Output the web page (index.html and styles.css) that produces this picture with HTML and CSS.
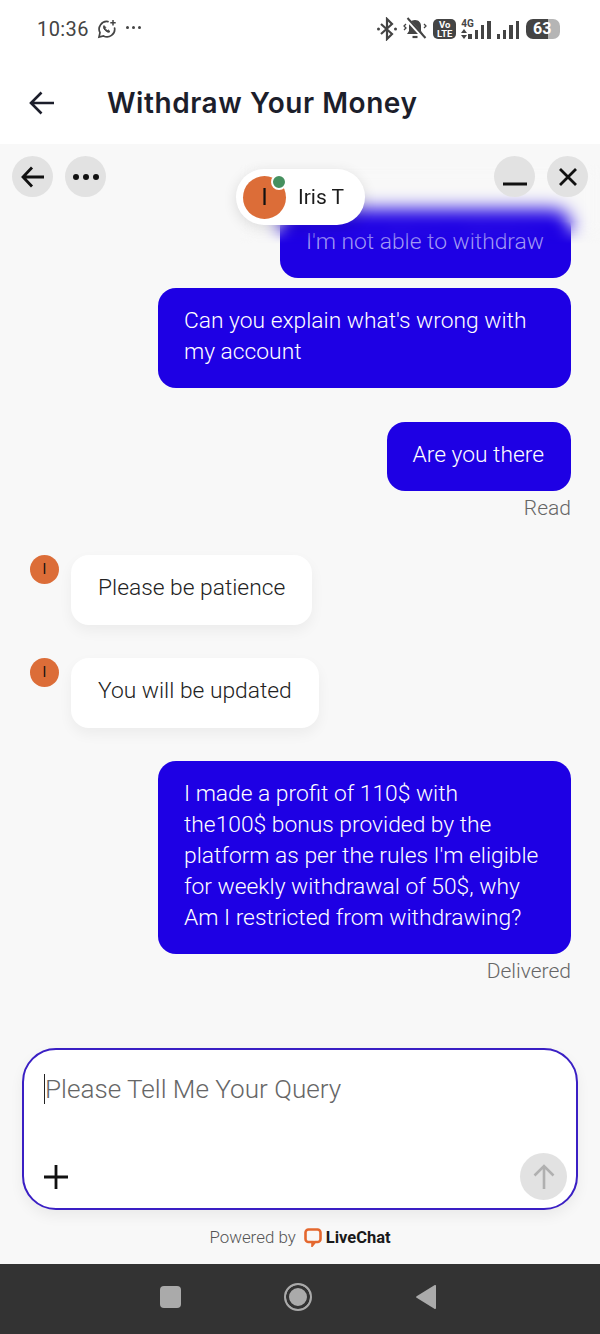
FILE: index.html
```html
<!DOCTYPE html>
<html>
  <head>
    <title>Withdraw Your Money</title>
    <meta charset="UTF-8" />
    <meta name="viewport" content="width=device-width, initial-scale=1.0" />
    <link rel="stylesheet" href="styles.css">
  </head>
  <body>
    <div class="status-bar">
      <div class="status-left">
        <span class="clock">10:36</span>
        <svg class="wa-icon" width="20" height="20" viewBox="0 0 20 20" fill="none" stroke="#444" stroke-width="1.7">
          <path d="M11 2.6A7.6 7.6 0 0 0 3 13.6L2 18l4.5-1.1A7.6 7.6 0 0 0 17.6 9" stroke-linecap="round" />
          <path d="M7 6.6c-1 1 -.6 3 1.2 4.8s3.8 2.3 4.8 1.2l-1.7-1.6-1 .6c-1-.5-1.7-1.2-2.2-2.2l.6-1z" fill="#444" stroke-width="1" />
          <path d="M16 1v5.4M13.3 3.7h5.4" stroke-width="1.5" />
        </svg>
        <span class="dots-small"><i></i><i></i><i></i></span>
      </div>
      <div class="status-right">
        <svg width="20" height="24" viewBox="0 0 20 24" fill="none" stroke="#444" stroke-width="2.200">
          <path d="M4 7l11 10-5 5V2l5 5L4 17" />
          <circle cx="1.500" cy="12" r="1.500" fill="#444" stroke="none" />
          <circle cx="18.500" cy="12" r="1.500" fill="#444" stroke="none" />
        </svg>
        <svg width="24" height="24" viewBox="0 0 24 24" fill="none" stroke="#444">
          <path d="M12 3c-4 0-6 3-6 6v5l-2 3h16l-2-3V9c0-3-2-6-6-6z" fill="#444" stroke="none" />
          <path d="M9.500 20h5" stroke-width="2.200" />
          <path d="M3 1l18 20" stroke="#fff" stroke-width="3.600" />
          <path d="M4.500 1l18 20" stroke-width="2" />
          <path d="M3 7L1 9l2 2-2 2M21 7l2 2-2 2" stroke-width="1.300" />
        </svg>
        <span class="volte">Vo<br>LTE</span>
        <div class="signal-wrap">
          <div class="net-type">
            <span>4G</span>
            <svg width="6" height="10" viewBox="0 0 6 10" fill="#444">
              <path d="M3 0l3 4H0zM3 10L0 6h6z" />
            </svg>
          </div>
          <div class="bars">
            <i class="b1"></i><i class="b2"></i><i class="b3"></i><i class="b4"></i>
          </div>
        </div>
        <div class="bars second">
          <i class="b1"></i><i class="b2"></i><i class="b3"></i><i class="b4"></i>
        </div>
        <div class="battery"><span>63</span></div>
      </div>
    </div>

    <header class="app-header">
      <svg width="26" height="24" viewBox="0 0 26 24" fill="none" stroke="#1c1e2b" stroke-width="2.600">
        <path d="M25 12H2M12.500 1.500L2 12l10.500 10.500" />
      </svg>
      <h1>Withdraw Your Money</h1>
    </header>

    <main class="chat">
      <div class="chat-toolbar">
        <div class="toolbar-group">
          <button class="round-btn">
            <svg width="26" height="24" viewBox="0 0 26 24" fill="none" stroke="#111" stroke-width="2.800">
              <path d="M24 12H3M12 2.500L3 12l9 9.500" />
            </svg>
          </button>
          <button class="round-btn">
            <svg width="28" height="8" viewBox="0 0 28 8" fill="#111">
              <circle cx="4" cy="4" r="3" /><circle cx="14" cy="4" r="3" /><circle cx="24" cy="4" r="3" />
            </svg>
          </button>
        </div>
        <div class="toolbar-group">
          <button class="round-btn">
            <svg width="24" height="24" viewBox="0 0 24 24" stroke="#111" stroke-width="3">
              <path d="M0 19h24" />
            </svg>
          </button>
          <button class="round-btn">
            <svg width="20" height="20" viewBox="0 0 20 20" stroke="#111" stroke-width="2.800">
              <path d="M2 2l16 16M18 2L2 18" />
            </svg>
          </button>
        </div>
      </div>

      <div class="top-blur"></div>

      <div class="agent-pill">
        <div class="agent-avatar">I<span class="online-dot"></span></div>
        <span class="agent-name">Iris T</span>
      </div>

      <div class="messages">
        <div class="bubble out faded">I'm not able to withdraw</div>
        <div class="bubble out second-line">Can you explain what's wrong with my account</div>
        <div class="bubble out new-group">Are you there</div>
        <div class="msg-status">Read</div>

        <div class="msg-in first-in">
          <div class="small-avatar">I</div>
          <div class="bubble in">Please be patience</div>
        </div>
        <div class="msg-in next-in">
          <div class="small-avatar">I</div>
          <div class="bubble in">You will be updated</div>
        </div>

        <div class="bubble out wide">I made a profit of 110$ with the100$ bonus provided by the platform as per the rules I'm eligible for weekly withdrawal of 50$, why Am I restricted from withdrawing?</div>
        <div class="msg-status">Delivered</div>
      </div>

      <div class="composer">
        <div class="composer-input"><span class="caret"></span>Please Tell Me Your Query</div>
        <div class="composer-actions">
          <svg width="24" height="24" viewBox="0 0 24 24" stroke="#111" stroke-width="2.800">
            <path d="M12 0v24M0 12h24" />
          </svg>
          <button class="send-btn">
            <svg width="22" height="26" viewBox="0 0 22 26" fill="none" stroke="#b0b0b0" stroke-width="2.600">
              <path d="M11 25V2M1.500 11.500L11 2l9.500 9.500" />
            </svg>
          </button>
        </div>
      </div>

      <div class="powered">
        <span>Powered by</span>
        <svg width="18" height="19" viewBox="0 0 18 19" fill="none" stroke="#e4682f" stroke-width="2.600">
          <path d="M4.500 1.500h9a3 3 0 0 1 3 3v6.500a3 3 0 0 1-3 3h-2.500l-2.500 3v-3h-4a3 3 0 0 1-3-3V4.500a3 3 0 0 1 3-3z" />
        </svg>
        <b>LiveChat</b>
      </div>
    </main>

    <nav class="nav-bar">
      <span class="nav-square"></span>
      <span class="nav-circle"></span>
      <svg width="20" height="24" viewBox="0 0 20 24" fill="#aaa">
        <path d="M20 1v22a1 1 0 0 1-1.600.8L.6 12.800a1 1 0 0 1 0-1.600L18.400.2A1 1 0 0 1 20 1z" />
      </svg>
    </nav>
  </body>
</html>
```

FILE: styles.css
```css
* {
  box-sizing: border-box;
}
body {
  margin: 0;
  width: 600px;
  height: 1334px;
  display: flex;
  flex-direction: column;
  overflow: hidden;
  background: #fff;
  font-family: Roboto, sans-serif;
}
button {
  border: none;
  padding: 0;
  cursor: pointer;
}

/* status bar */
.status-bar {
  height: 60px;
  padding: 14px 40px 0 37px;
  display: flex;
  justify-content: space-between;
  align-items: flex-start;
  color: #444;
}
.status-left {
  display: flex;
  align-items: center;
  height: 30px;
}
.clock {
  font-size: 20px;
  letter-spacing: 0.4px;
}
.wa-icon {
  margin-left: 8px;
}
.dots-small {
  display: flex;
  gap: 3px;
  margin-left: 9px;
  margin-bottom: 3px;
}
.dots-small i {
  width: 3px;
  height: 3px;
  border-radius: 50%;
  background: #444;
}
.status-right {
  display: flex;
  align-items: center;
  height: 30px;
  gap: 6px;
}
.volte {
  width: 23px;
  height: 20px;
  background: #444;
  color: #fff;
  border-radius: 5px;
  font-size: 9.500px;
  font-weight: 700;
  line-height: 9px;
  text-align: center;
  padding-top: 1px;
}
.signal-wrap {
  display: flex;
  align-items: flex-end;
  gap: 1px;
  height: 20px;
  margin-left: -1px;
}
.net-type {
  width: 6px;
  display: flex;
  flex-direction: column;
  align-items: flex-start;
  font-size: 10px;
  font-weight: 700;
  line-height: 10px;
  white-space: nowrap;
}
.bars {
  display: flex;
  align-items: flex-end;
  gap: 2.800px;
  height: 20px;
}
.bars i {
  width: 3.500px;
  background: #444;
}
.bars .b1 { height: 5px; }
.bars .b2 { height: 9px; }
.bars .b3 { height: 14px; }
.bars .b4 { height: 18px; }
.battery {
  width: 34px;
  height: 20px;
  margin-left: 1px;
  border-radius: 7px;
  background: linear-gradient(to right, #444 65%, #b5b5b5 65%);
  color: #fff;
  font-size: 16px;
  font-weight: 700;
  line-height: 20px;
  padding-left: 7px;
}
.battery span {
  display: block;
}

/* app header */
.app-header {
  height: 84px;
  padding: 2px 0 0 29px;
  display: flex;
  align-items: center;
  gap: 52px;
  background: #fff;
}
.app-header h1 {
  margin: 0;
  font-family: Inter, sans-serif;
  font-size: 28px;
  font-weight: 600;
  color: #1c1e2b;
  letter-spacing: 0.55px;
}

/* chat */
.chat {
  position: relative;
  flex: 1;
  display: flex;
  flex-direction: column;
  background: #f8f8f8;
}
.chat-toolbar {
  position: relative;
  z-index: 2;
  display: flex;
  justify-content: space-between;
  padding: 12px 12px 0;
}
.toolbar-group {
  display: flex;
  gap: 12px;
}
.round-btn {
  width: 41px;
  height: 41px;
  border-radius: 50%;
  background: #e2e2e2;
  display: flex;
  align-items: center;
  justify-content: center;
}
.top-blur {
  position: absolute;
  left: 240px;
  right: 0;
  top: 20px;
  height: 80px;
  z-index: 1;
  backdrop-filter: blur(9px);
  -webkit-mask-image: linear-gradient(to bottom, #000 72%, transparent 100%);
  mask-image: linear-gradient(to bottom, #000 72%, transparent 100%);
}
.agent-pill {
  position: absolute;
  left: 236px;
  top: 25px;
  width: 129px;
  height: 56px;
  border-radius: 28px;
  background: #fff;
  box-shadow: 0 3px 14px rgba(0, 0, 0, 0.12);
  display: flex;
  align-items: center;
  padding-left: 7px;
  gap: 12px;
  z-index: 2;
}
.agent-avatar {
  position: relative;
  width: 43px;
  height: 43px;
  border-radius: 50%;
  background: #dc6d38;
  color: #111;
  font-size: 24px;
  text-align: center;
  line-height: 43px;
}
.online-dot {
  position: absolute;
  right: -1px;
  top: -2px;
  width: 16px;
  height: 16px;
  border-radius: 50%;
  background: #46905f;
  border: 2px solid #fff;
}
.agent-name {
  font-size: 21px;
  color: #1c1c1c;
}

.messages {
  flex: 1;
  display: flex;
  flex-direction: column;
  align-items: flex-end;
  padding: 12px 29px 0 30px;
}
.bubble {
  border-radius: 18px;
  padding: 17px 27px 21px 26px;
  font-size: 22.800px;
  font-weight: 300;
  line-height: 31px;
}
.bubble.out {
  background: #1e00e4;
  color: #fff;
}
.bubble.in {
  background: #fff;
  color: #222;
  padding: 17px 27px 22px;
  box-shadow: 0 6px 14px rgba(0, 0, 0, 0.05);
}
.bubble.faded {
  width: 291px;
  white-space: nowrap;
  color: #a79ff5;
}
.second-line {
  width: 413px;
  margin-top: 10px;
}
.new-group {
  margin-top: 34px;
}
.wide {
  width: 413px;
  margin-top: 33px;
}
.msg-status {
  margin-top: 5px;
  font-size: 21px;
  font-weight: 300;
  color: #666;
  line-height: 25px;
}
.msg-in {
  align-self: flex-start;
  display: flex;
  align-items: flex-start;
  gap: 12px;
}
.first-in {
  margin-top: 34px;
}
.next-in {
  margin-top: 33px;
}
.small-avatar {
  width: 29px;
  height: 29px;
  border-radius: 50%;
  background: #dc6d38;
  color: #111;
  font-size: 14px;
  text-align: center;
  line-height: 29px;
}

/* composer */
.composer {
  margin: 0 22px;
  height: 162px;
  border: 2px solid #3a1fc4;
  border-radius: 34px;
  background: #fff;
  box-shadow: 0 6px 14px rgba(0, 0, 0, 0.06);
  padding: 23px 9px 8px 20px;
  display: flex;
  flex-direction: column;
  justify-content: space-between;
}
.composer-input {
  font-size: 26.100px;
  font-weight: 300;
  color: #666;
  line-height: 32px;
}
.caret {
  display: inline-block;
  width: 1px;
  height: 30px;
  background: #222;
  vertical-align: -6px;
}
.composer-actions {
  display: flex;
  justify-content: space-between;
  align-items: center;
}
.send-btn {
  width: 47px;
  height: 47px;
  border-radius: 50%;
  background: #e2e2e2;
  display: flex;
  align-items: center;
  justify-content: center;
}
.powered {
  height: 54px;
  display: flex;
  align-items: center;
  justify-content: center;
  font-size: 16.900px;
  font-weight: 300;
  color: #555;
  gap: 8px;
}
.powered b {
  margin-left: -4px;
  color: #1a1a1a;
  font-weight: 700;
  font-size: 16.500px;
}

/* nav bar */
.nav-bar {
  height: 70px;
  background: #333;
  display: flex;
  align-items: center;
  padding: 0 0 4px 160px;
}
.nav-square {
  width: 21px;
  height: 22px;
  border-radius: 4px;
  background: #aaa;
}
.nav-circle {
  width: 28px;
  height: 28px;
  margin: 0 104px 0 103px;
  border-radius: 50%;
  border: 2px solid #aaa;
  background: #aaa;
  box-shadow: inset 0 0 0 3px #333;
}
```
